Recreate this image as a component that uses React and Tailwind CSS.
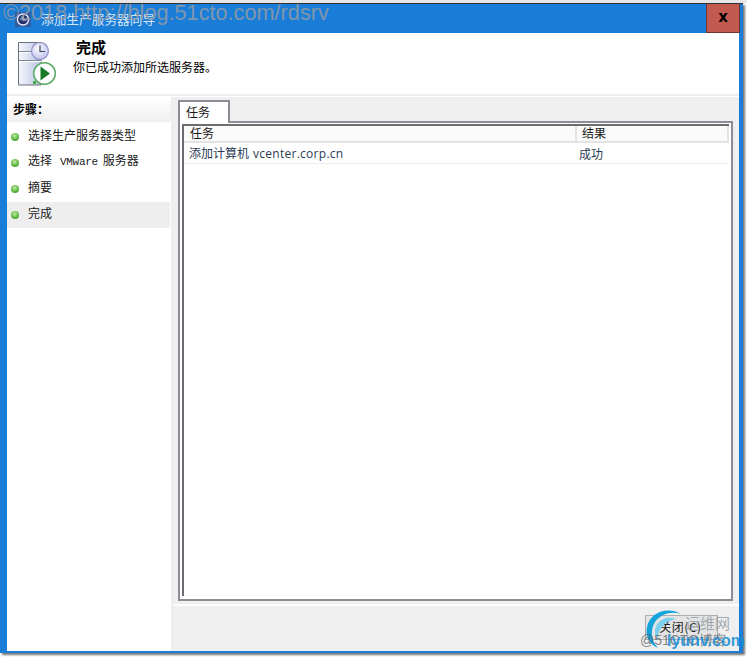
const cjk = { fontFamily: '"Noto Sans CJK SC", sans-serif' };

function ClockIcon() {
  return (
    <svg width="16" height="15" viewBox="0 0 16 15" className="shrink-0">
      <rect x="0" y="0" width="16" height="15" fill="#3f4f8a" opacity="0.75" />
      <circle cx="8" cy="7.500" r="5.500" fill="#27306a" stroke="#e8ecff" strokeWidth="1.4" />
      <path d="M8 4.300V7.900H11" fill="none" stroke="#fff" strokeWidth="1.2" />
    </svg>
  );
}

function WizardIcon() {
  return (
    <svg width="39" height="44" viewBox="0 0 39 44" className="shrink-0">
      <defs>
        <linearGradient id="srv" x1="0" y1="0" x2="1" y2="0">
          <stop offset="0" stopColor="#f6f7fd" />
          <stop offset="1" stopColor="#b9c2e4" />
        </linearGradient>
        <radialGradient id="clk" cx="0.4" cy="0.35" r="0.7">
          <stop offset="0" stopColor="#fbfbff" />
          <stop offset="1" stopColor="#bcc0ec" />
        </radialGradient>
      </defs>
      <path d="M.5 .5H23V43H.5Z" fill="url(#srv)" stroke="#67707f" />
      <path d="M1 9.500H23M1 18.500H23" stroke="#7d8595" />
      <path d="M1 10.500H23M1 19.500H23" stroke="#fff" />
      <circle cx="22" cy="9" r="8.500" fill="url(#clk)" stroke="#8f90c6" strokeWidth="1.2" />
      <path d="M22 3.500V9.500H27" fill="none" stroke="#3d3f55" strokeWidth="1.2" />
      <path d="M22 0V1.500M22 17V18.500" stroke="#8f90c6" />
      <circle cx="26.500" cy="31.500" r="10.800" fill="#fff" stroke="#61ad6b" strokeWidth="1.6" />
      <path d="M22.500 24.500L32 31.500L22.500 38.500Z" fill="#177a26" />
      <rect x="15" y="39" width="3" height="3" fill="#3fb04c" />
    </svg>
  );
}

function StepRow({ children, active }) {
  return (
    <div className={`flex h-[26px] items-center pl-[4px] text-[12px] text-[#1a1a1a] ${active ? 'bg-[#eeeeee] mr-px' : ''}`}>
      <span className="h-[8px] w-[8px] shrink-0 rounded-full bg-[radial-gradient(circle_at_45%_35%,#c5eaa9,#5db83f_55%,#2f8d2a)]" />
      <span className="mb-[5px] ml-[9px] flex items-baseline whitespace-nowrap" style={cjk}>{children}</span>
    </div>
  );
}

function Sidebar() {
  return (
    <aside className="flex w-[164px] shrink-0 flex-col bg-white">
      <div className="mb-[2px] flex h-[25px] items-center bg-gradient-to-b from-white to-[#efefef] pb-px pl-[6px] text-[12px] font-bold text-black" style={cjk}>
        步骤：
      </div>
      <StepRow>选择生产服务器类型</StepRow>
      <StepRow>
        选择
        <span className="ml-[8px] mr-[5px] font-['Liberation_Mono',monospace] text-[11px] tracking-[-0.3px]">VMware</span>
        服务器
      </StepRow>
      <StepRow>摘要</StepRow>
      <StepRow active>完成</StepRow>
    </aside>
  );
}

function TaskTable() {
  return (
    <div className="flex min-h-0 flex-1 flex-col border-[2px] border-r-0 border-b-0 border-[#6d6d6d] bg-white">
      <div className="flex h-[17px] shrink-0 border-b-[2px] border-[#e3e3e3] bg-[#fafafa] text-[12px] leading-[13px] text-[#1a1a1a]" style={cjk}>
        <div className="w-[393px] border-r-[2px] border-[#e3e3e3] pl-[6px]">任务</div>
        <div className="flex-1 border-r-[2px] border-[#e3e3e3] pl-[5px]">结果</div>
      </div>
      <div className="flex h-[21px] shrink-0 items-center border-b border-[#ededed] pt-[2px] text-[12px] text-[#2a3a55]">
        <div className="w-[393px] whitespace-nowrap pl-[5px]" style={{ fontFamily: '"Open Sans", "Noto Sans CJK SC", sans-serif' }}>
          添加计算机<span className="ml-[4px] tracking-[0.27px]">vcenter.corp.cn</span>
        </div>
        <div className="flex-1 pl-[2px]" style={cjk}>成功</div>
      </div>
    </div>
  );
}

function Watermarks() {
  return (
    <>
      <div className="pointer-events-none absolute left-[3px] top-0 whitespace-nowrap font-['Liberation_Sans',sans-serif] text-[21.700px] leading-[26px] text-[#8f9aa6]/90">
        ©2018 http://blog.51cto.com/rdsrv
      </div>
      <div className="pointer-events-none absolute left-[644px] top-[608px] h-[45px] w-[96px]">
        <svg width="42" height="42" viewBox="0 0 42 42" className="absolute left-0 top-0">
          <path d="M37 6C24-2 6 4 3 19c-2 10 3 18 11 21C7 33 6 22 11 14 17 6 27 3 37 6Z" fill="#14a4dc" />
          <path d="M32 11C22 7 12 13 11 22c-.5 5 1 8 3 11-1-9 5-20 18-22Z" fill="#7fd0ee" />
        </svg>
        <span className="absolute left-[41px] top-[6px] whitespace-nowrap text-[15px] leading-[18px] text-[#8d99a3]/80" style={cjk}>运维网</span>
        <span className="absolute left-[-4px] top-[24px] whitespace-nowrap font-['Liberation_Sans',sans-serif] text-[14px] leading-[16px] text-[#555]/70">@51CTO博客</span>
        <span className="absolute left-[23px] top-[23px] whitespace-nowrap font-['Liberation_Sans',sans-serif] text-[16px] font-bold leading-[20px] text-[#1a8fd8]/90">lyunv.com</span>
      </div>
    </>
  );
}

export default function App() {
  return (
    <div className="relative h-[657px] w-[747px] overflow-hidden bg-white">
      <div className="h-[3px] bg-[#e6e6e6]" />
      <div className="flex h-[650px] w-[743px] flex-col border-t border-[#333] bg-[#1a7dd7] shadow-[2px_2px_2px_#777]">
        <div className="flex h-[29px] shrink-0 items-start">
          <div className="ml-[15px] mt-[8px]"><ClockIcon /></div>
          <div className="ml-[10px] mt-[7px] text-[12.700px] leading-[16px] text-[#eef5fc]/90" style={cjk}>添加生产服务器向导</div>
          <div className="ml-auto mr-[3px] flex h-[29px] w-[34px] items-center justify-center border border-t-0 border-[#6b3530] bg-[#c35a50] pb-[2px] font-['DejaVu_Sans',sans-serif] text-[15px] font-bold leading-none text-black">
            x
          </div>
        </div>
        <div className="ml-[7px] mr-[4px] mb-[2px] flex min-h-0 flex-1 flex-col bg-white">
          <header className="flex h-[63px] shrink-0 border-b-[2px] border-[#eeeeee]">
            <div className="ml-[11px] mt-[9px]"><WizardIcon /></div>
            <div className="ml-[16px] mt-[4px]">
              <div className="ml-[3px] text-[15px] font-bold leading-[19px] text-black" style={cjk}>完成</div>
              <div className="mt-[3px] text-[12px] leading-[16px] text-black" style={cjk}>你已成功添加所选服务器。</div>
            </div>
          </header>
          <div className="mt-px flex min-h-0 flex-1">
            <Sidebar />
            <main className="flex min-w-0 flex-1 flex-col border-l-[3px] border-[#eeeeee]">
              <div className="flex h-[507px] shrink-0 flex-col bg-[#efefef] pb-[3px] pl-[4px] pr-[6px] pt-[3px]">
                <div className="relative z-10 -mb-[2px] flex h-[23px] w-[52px] items-center border-[2px] border-b-0 border-[#8c8c96] bg-white pb-px pl-[6px] text-[12px] text-[#1a1a1a]" style={cjk}>
                  任务
                </div>
                <div className="flex min-h-0 flex-1 flex-col border-[2px] border-[#8c8c96] bg-white px-[2px] pt-[1px] pb-[3px]">
                  <TaskTable />
                </div>
              </div>
              <div className="flex flex-1 items-start justify-end border-t-[2px] border-[#ffffff] bg-[#efefef] pr-[21px] pt-[9px]">
                <button className="flex h-[25px] w-[73px] items-center justify-center border border-[#adadad] bg-[#e4e4e4] pb-[2px] pr-[2px] text-[12px] tracking-[0.5px] text-[#1a1a1a]" style={cjk}>
                  关闭(C)
                </button>
              </div>
            </main>
          </div>
        </div>
      </div>
      <Watermarks />
    </div>
  );
}
